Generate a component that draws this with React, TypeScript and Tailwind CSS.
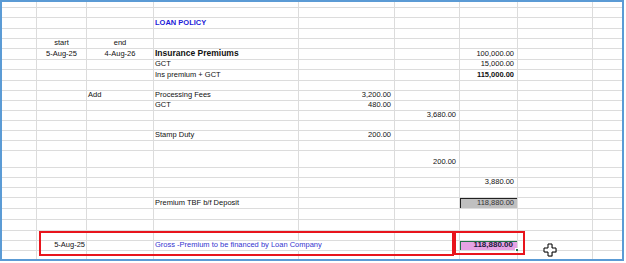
type Cell = { c: number; t: string; cls?: string; box?: string }
type Row = { h: string; cells: Cell[]; last?: boolean }

const colW = ['w-[35px]', 'w-[50px]', 'w-[67px]', 'w-[145px]', 'w-[96px]', 'w-[65px]', 'w-[58px]', 'w-[75px]', 'w-[29px]']

const L = 'justify-start pl-[1px]'
const R = 'justify-end pr-[3px]'
const C = 'justify-center'

const rows: Row[] = [
  { h: 'h-[6px]', cells: [] },
  { h: 'h-[10px]', cells: [] },
  { h: 'h-[11px]', cells: [{ c: 3, t: 'LOAN POLICY', cls: `${L} font-bold text-[#1c1cd8]` }] },
  { h: 'h-[10px]', cells: [] },
  {
    h: 'h-[10px]',
    cells: [
      { c: 1, t: 'start', cls: C },
      { c: 2, t: 'end', cls: C },
    ],
  },
  {
    h: 'h-[11px]',
    cells: [
      { c: 1, t: '5-Aug-25', cls: C },
      { c: 2, t: '4-Aug-26', cls: C },
      { c: 3, t: 'Insurance Premiums', cls: `${L} font-bold text-[8.5px]` },
      { c: 6, t: '100,000.00', cls: R },
    ],
  },
  {
    h: 'h-[10px]',
    cells: [
      { c: 3, t: 'GCT', cls: L },
      { c: 6, t: '15,000.00', cls: R },
    ],
  },
  {
    h: 'h-[11px]',
    cells: [
      { c: 3, t: 'Ins premium + GCT', cls: L },
      { c: 6, t: '115,000.00', cls: `${R} font-bold` },
    ],
  },
  { h: 'h-[10px]', cells: [] },
  {
    h: 'h-[10px]',
    cells: [
      { c: 2, t: 'Add', cls: L },
      { c: 3, t: 'Processing Fees', cls: L },
      { c: 4, t: '3,200.00', cls: R },
    ],
  },
  {
    h: 'h-[10px]',
    cells: [
      { c: 3, t: 'GCT', cls: L },
      { c: 4, t: '480.00', cls: R },
    ],
  },
  { h: 'h-[10px]', cells: [{ c: 5, t: '3,680.00', cls: R }] },
  { h: 'h-[10px]', cells: [] },
  {
    h: 'h-[10px]',
    cells: [
      { c: 3, t: 'Stamp Duty', cls: L },
      { c: 4, t: '200.00', cls: R },
    ],
  },
  { h: 'h-[10px]', cells: [] },
  { h: 'h-[17px]', cells: [{ c: 5, t: '200.00', cls: R }] },
  { h: 'h-[10px]', cells: [] },
  { h: 'h-[10px]', cells: [{ c: 6, t: '3,880.00', cls: R }] },
  { h: 'h-[10px]', cells: [] },
  {
    h: 'h-[11px]',
    cells: [
      { c: 3, t: 'Premium TBF b/f Deposit', cls: L },
      {
        c: 6,
        t: '118,880.00',
        cls: `${R} text-[#333]`,
        box: 'bg-[#c0c0c0] border-[#222] shadow-[inset_1px_1px_0_#222]',
      },
    ],
  },
  { h: 'h-[11px]', cells: [] },
  { h: 'h-[11px]', cells: [] },
  { h: 'h-[10px]', cells: [] },
  {
    h: 'h-[10px]',
    cells: [
      { c: 1, t: '5-Aug-25', cls: 'justify-end pr-[1px]' },
      { c: 3, t: 'Gross -Premium to be financed by Loan Company', cls: `${L} text-[#3434d0]`, box: 'border-r-transparent' },
      {
        c: 6,
        t: '118,880.00',
        cls: `justify-end pr-[4px] font-bold text-[8px] text-[#1a1a3a]`,
        box: 'bg-[#e6a2e4] border-[#217346] shadow-[inset_1px_1px_0_#217346]',
      },
    ],
  },
  { h: 'h-[8px]', cells: [], last: true },
]

function SheetRow({ row }: { row: Row }) {
  return (
    <div className={`flex ${row.h}`}>
      {colW.map((w, i) => {
        const cell = row.cells.find((x) => x.c === i)
        const edge = `${i < 8 ? 'border-r' : ''} ${row.last ? '' : 'border-b'}`
        return (
          <div
            key={i}
            className={`relative flex shrink-0 items-end pb-[1px] ${w} ${edge} border-[#dcdcdc] ${cell?.box ?? ''} ${cell?.cls ?? ''}`}
          >
            {cell && <span className="whitespace-nowrap leading-[9px]">{cell.t}</span>}
            {cell?.box?.includes('#217346') && (
              <span className="absolute -bottom-[2px] -right-[2px] h-[4px] w-[4px] border border-white bg-[#217346]" />
            )}
          </div>
        )
      })}
    </div>
  )
}

export default function App() {
  return (
    <div className="relative h-[263px] w-[626px] bg-white font-['Liberation_Sans',Arial,sans-serif] text-[7.5px] text-[#111]">
      <div className="h-[261px] w-[624px] border-2 border-[#5b9bd5]">
        {rows.map((row, i) => (
          <SheetRow key={i} row={row} />
        ))}
      </div>

      {/* annotation boxes */}
      <div className="absolute left-[39px] top-[231px] h-[25px] w-[415px] border-2 border-[#e8141c]" />
      <div className="absolute left-[454px] top-[231px] h-[24px] w-[71px] border-2 border-[#e8141c]" />

      {/* excel fat cross cursor */}
      <svg className="absolute left-[543px] top-[243px]" width="15" height="15" viewBox="0 0 15 15">
        <polygon
          points="5,1 9,1 9,5 13,5 13,9 9,9 9,13 5,13 5,9 1,9 1,5 5,5"
          transform="translate(1 1)"
          fill="#888"
          opacity="0.4"
        />
        <polygon points="5,1 9,1 9,5 13,5 13,9 9,9 9,13 5,13 5,9 1,9 1,5 5,5" fill="#fff" stroke="#000" strokeWidth="1" />
      </svg>
    </div>
  )
}
